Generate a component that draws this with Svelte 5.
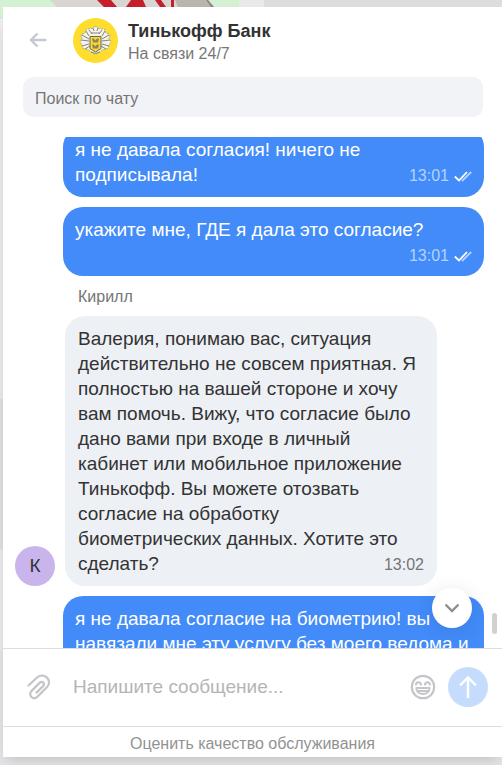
<script>
	import { onMount } from 'svelte';

	const messages = [
		{ id: 1, own: true, text: 'я не давала согласия! ничего не\nподписывала!', time: '13:01' },
		{ id: 2, own: true, text: 'укажите мне, ГДЕ я дала это согласие?', time: '13:01' },
		{
			id: 3,
			own: false,
			author: 'Кирилл',
			text: 'Валерия, понимаю вас, ситуация\nдействительно не совсем приятная. Я\nполностью на вашей стороне и хочу\nвам помочь. Вижу, что согласие было\nдано вами при входе в личный\nкабинет или мобильное приложение\nТинькофф. Вы можете отозвать\nсогласие на обработку\nбиометрических данных. Хотите это\nсделать?',
			time: '13:02'
		},
		{ id: 4, own: true, text: 'я не давала согласие на биометрию! вы\nнавязали мне эту услугу без моего ведома и' }
	];

	let search = $state('');
	let draft = $state('');
	let list = $state(null);

	function toBottom() {
		list?.scrollTo({ top: list.scrollHeight, behavior: 'smooth' });
	}

	function send(e) {
		e.preventDefault();
		draft = '';
	}

	onMount(() => {
		list.scrollTop = 10;
	});
</script>

<div class="page">
	<svg class="backdrop" viewBox="0 0 502 7" preserveAspectRatio="xMinYMin slice" aria-hidden="true">
		<rect width="239" height="7" fill="#d4f1d3" />
		<rect x="239" width="25" height="7" fill="#e8e9e8" />
		<rect x="264" width="238" height="7" fill="#dcdddf" />
		<path d="M50 0h158l6 7H57z" fill="#d8d5d2" />
		<path d="M175 0h33l6 7h-36z" fill="#bbb5b0" />
		<path d="M97 0h14l6 7h-13zM131 0h12l3 7h-20zM155 0h6l5 7h-6zM171 0h3v7h-3z" fill="#c51f2b" />
		<path d="M206 0h2l6 7h-3z" fill="#8f8985" />
	</svg>

	<section class="chat">
		<header>
			<button class="icon" aria-label="Назад">
				<svg width="18" height="16" viewBox="0 0 18 16" fill="none" stroke="#c5c9d0" stroke-width="2.4">
					<path d="M17.5 8H2M8.5 1.500 2 8l6.500 6.500" />
				</svg>
			</button>
			<svg class="logo" viewBox="0 0 45 45" aria-hidden="true">
				<circle cx="22.500" cy="22.500" r="22.500" fill="#ffdd2d" />
				<path
					d="M22.500 8.500c2 0 2 2 4 2l5 .5 1.500 4 4 1.500-1 4 2 3-2 4-1 3-5 1-4 3-3.500 2-3.500-2-4-3-5-1-1-3-2-4 2-3-1-4 4-1.500 1.500-4 5-.5c2 0 2-2 4-2z"
					fill="#f4f3ea"
					stroke="#9a9a8e"
					stroke-width=".8"
					stroke-dasharray="2 1"
				/>
				<path
					d="M13 13l3 5M9 17l7 4M8 22l8 1M9 28l7-2M12 31l5-3M32 13l-3 5M36 17l-7 4M37 22l-8 1M36 28l-7-2M33 31l-5-3M16 12l3 4M29 12l-3 4M20 10l1 3M25 10l-1 3M18 15h9M18 34l4.500 1.500L27 34"
					fill="none"
					stroke="#85857b"
				/>
				<path d="M17 18.500h11v12L22.500 34 17 30.500z" fill="#fbd92e" stroke="#66675f" />
				<path d="M19 20.500h2l1 2 2-2h2l-1 4h-5zM19 26.500h2l1 2 2-2h2l-1 4h-5z" fill="#8b845d" />
			</svg>
			<div>
				<h1>Тинькофф Банк</h1>
				<p>На связи 24/7</p>
			</div>
		</header>

		<div class="search">
			<input type="text" aria-label="Поиск по чату" placeholder="Поиск по чату" bind:value={search} />
		</div>

		<div class="history">
			<div class="list" bind:this={list}>
				{#each messages as m (m.id)}
					{#if m.author}
						<div class="author">{m.author}</div>
					{/if}
					<div class="row" class:own={m.own}>
						{#if !m.own}
							<span class="avatar">{m.author[0]}</span>
						{/if}
						<div class="bubble">
							{m.text}
							{#if m.time}
								<span class="time">
									{m.time}
									{#if m.own}
										<svg width="18" height="11" viewBox="0 0 18 11" fill="none" stroke-width="1.8">
											<path d="M.8 5.500 5 9.500 13 1" stroke="#fff" />
											<path d="M8 10 17.200 1" stroke="#b4d2fd" />
										</svg>
									{/if}
								</span>
							{/if}
						</div>
					</div>
				{/each}
			</div>
			<span class="thumb"></span>
			<button class="down" aria-label="Вниз" onclick={toBottom}>
				<svg width="16" height="10" viewBox="0 0 16 10" fill="none" stroke="#8e8e8e" stroke-width="2.4">
					<path d="M1.500 1.500 8 8l6.500-6.500" />
				</svg>
			</button>
		</div>

		<form onsubmit={send}>
			<button type="button" class="icon" aria-label="Прикрепить файл">
				<svg width="24" height="26" viewBox="0 0 24 26" fill="none" stroke="#c3c5c9" stroke-width="2.200" stroke-linecap="round">
					<path d="M1.500 11.500 9.500 4c3-2.800 7-3.200 10-.8 3.200 2.800 3.300 7 .6 9.800l-9.500 9.600c-1.900 1.900-4.400 1.900-6.100.4-1.800-1.700-1.700-4.300.1-6.100l8-8c1.200-1.200 2.700-1.200 3.700-.3 1 1 .9 2.400-.2 3.500L9.500 18.600" />
				</svg>
			</button>
			<input type="text" aria-label="Сообщение" placeholder="Напишите сообщение..." bind:value={draft} />
			<button type="button" class="icon" aria-label="Смайлики">
				<svg width="26" height="26" viewBox="0 0 26 26" fill="none" stroke="#c3c5c9" stroke-width="2.200" stroke-linecap="round">
					<circle cx="13" cy="13" r="11.200" />
					<path d="M6 10.500c.6-3 4.200-3 5 0M15 10.500c.7-3 4.300-3 5 0" />
					<path d="M6.300 14h13.400c0 3.600-2.900 6-6.700 6s-6.700-2.400-6.700-6zM8 17h10" stroke-width="1.800" stroke-linejoin="round" />
				</svg>
			</button>
			<button class="send" aria-label="Отправить">
				<svg width="20" height="24" viewBox="0 0 20 24" fill="none" stroke="#fff" stroke-width="2.400">
					<path d="M10 23V2.500M2 10.500l8-8 8 8" />
				</svg>
			</button>
		</form>

		<footer><a href="#rate">Оценить качество обслуживания</a></footer>
	</section>
</div>

<style>
	:global(body) {
		margin: 0;
		font-family: 'Liberation Sans', Arial, sans-serif;
		font-size: 16px;
		line-height: 20px;
		color: #333;
	}
	.page {
		box-sizing: border-box;
		display: flex;
		flex-direction: column;
		height: 100vh;
		padding: 0 0 8px 3px;
		overflow: hidden;
		background: linear-gradient(#d4f1d3 19px, #f3f3f3 19px, #e9e9e9 44px, #e9e9e9 399px, #dddee0 399px, #dddee0 549px, #e9e9e9 550px, #e9e9e9 650px, #e2e3e5 651px);
	}
	.backdrop { display: block; flex: none; height: 7px; margin-left: -3px; }
	.chat {
		display: flex;
		flex-direction: column;
		flex: 1;
		min-height: 0;
		background: #fff;
		box-shadow: 0 6px 12px -4px rgba(0, 0, 0, 0.16);
	}
	button {
		display: flex;
		align-items: center;
		justify-content: center;
		padding: 0;
		border: 0;
		background: none;
		cursor: pointer;
	}
	input {
		min-width: 0;
		padding: 0;
		border: 0;
		outline: 0;
		background: none;
		font: inherit;
		color: inherit;
	}
	header {
		display: flex;
		align-items: center;
		height: 66px;
		padding: 0 20px 0 26px;
	}
	.logo { width: 45px; height: 45px; margin: 0 10px 0 26px; }
	h1, p { margin: 0; }
	h1 { padding-top: 4px; font-size: 18px; line-height: 24px; }
	p { line-height: 22px; color: #777; }
	.search { padding: 4px 19px 20px 20px; }
	.search input {
		box-sizing: border-box;
		width: 100%;
		height: 40px;
		padding: 3px 12px 0;
		border-radius: 10px;
		background: #f2f3f7;
	}
	.search input::placeholder { color: #757575; opacity: 1; }
	.history { position: relative; flex: 1; min-height: 0; }
	.list { height: 100%; overflow-y: auto; scrollbar-width: none; }
	.row {
		display: flex;
		align-items: flex-end;
		gap: 10px;
		margin: 0 65px 10px 12px;
	}
	.row.own { margin: 0 18px 10px 60px; }
	.avatar {
		flex: none;
		width: 40px;
		border-radius: 50%;
		background: #c9b5ec;
		font-size: 19px;
		line-height: 40px;
		text-align: center;
	}
	.bubble {
		display: flow-root;
		flex: 1;
		padding: 10px 13px;
		border-radius: 20px;
		background: #edf0f5;
		font-size: 19px;
		line-height: 25px;
		white-space: pre-line;
	}
	.own .bubble { padding: 10px 12px; background: #428bf9; color: #fff; }
	.time {
		display: flex;
		align-items: center;
		gap: 5px;
		float: right;
		height: 20px;
		margin-top: 4px;
		font-size: 16px;
		line-height: 22px;
		white-space: nowrap;
		color: #757575;
	}
	.own .time { color: #b4d2fd; }
	.author { padding: 1px 75px 9px; color: #757575; }
	.thumb {
		position: absolute;
		right: 5px;
		bottom: 14px;
		width: 5px;
		height: 21px;
		border-radius: 3px;
		background: #d0d0d0;
	}
	.down {
		position: absolute;
		right: 30px;
		bottom: 20px;
		width: 40px;
		height: 40px;
		border-radius: 50%;
		background: #fff;
		box-shadow: 0 2px 20px rgba(0, 0, 0, 0.1);
	}
	form {
		position: relative;
		box-sizing: border-box;
		display: flex;
		align-items: center;
		height: 78px;
		padding: 0 14px 2px 24px;
		border-top: 1px solid #dcdde0;
		background: #fff;
	}
	form input { flex: 1; margin: 0 20px 0 22px; font-size: 19px; }
	form input::placeholder { color: #b5b5b5; opacity: 1; }
	.send {
		width: 40px;
		height: 40px;
		margin-left: 12px;
		border-radius: 50%;
		background: #c6dcfd;
	}
	footer {
		padding-top: 4px;
		border-top: 1px solid #dcdde0;
		text-align: center;
		line-height: 26px;
	}
	footer a { color: #929292; text-decoration: none; }
</style>
